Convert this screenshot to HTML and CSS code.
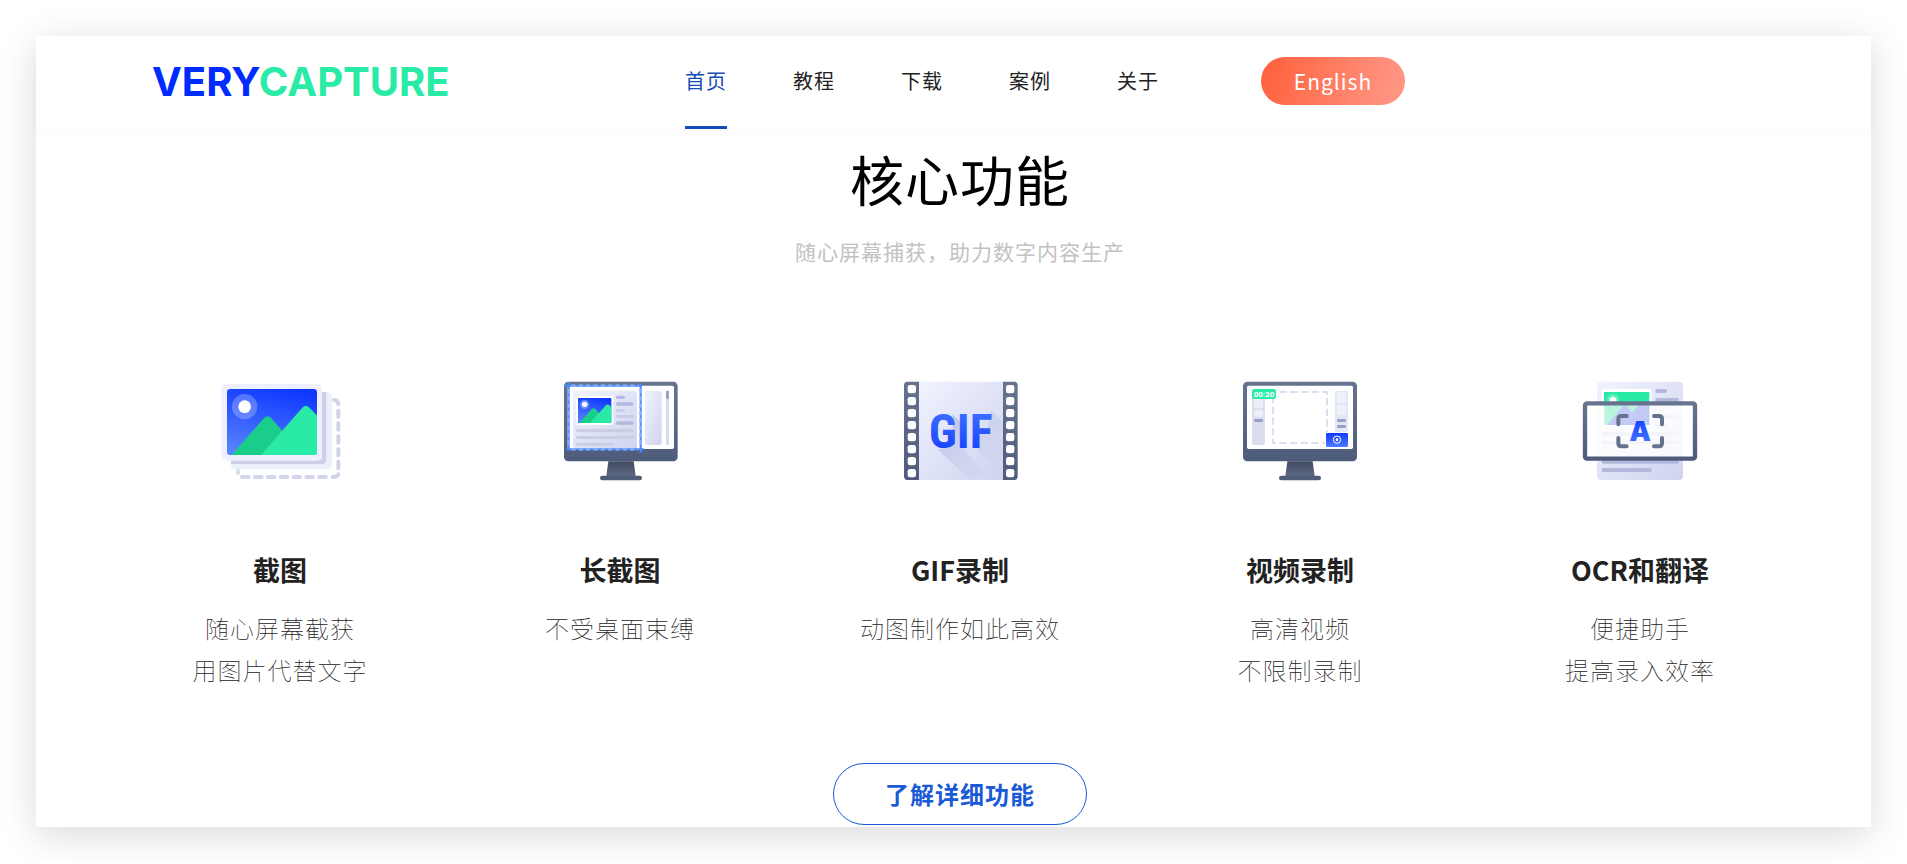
FILE: index.html
```html
<!DOCTYPE html>
<html lang="zh-CN">
<head>
<meta charset="utf-8">
<title>VERYCAPTURE</title>
<link rel="stylesheet" href="styles.css">
</head>
<body>
<div class="panel">
  <header class="header">
    <a class="logo" href="#"><span class="logo-very">VERY</span><span class="logo-capture">CAPTURE</span></a>
    <nav class="nav">
      <a class="nav-link active" href="#">首页</a>
      <a class="nav-link" href="#">教程</a>
      <a class="nav-link" href="#">下载</a>
      <a class="nav-link" href="#">案例</a>
      <a class="nav-link" href="#">关于</a>
    </nav>
    <button class="lang" type="button">English</button>
  </header>
  <main class="main">
    <h1 class="heading">核心功能</h1>
    <p class="subtitle">随心屏幕捕获，助力数字内容生产</p>
    <section class="features">
      <article class="feature">
        <svg class="art art-wide" viewBox="0 0 480 360" aria-hidden="true">
          <defs>
            <linearGradient id="sky" x1="0.6" y1="0" x2="0.3" y2="1"><stop offset="0" stop-color="#1039ff"/><stop offset="1" stop-color="#5683ff"/></linearGradient>
            <linearGradient id="paper" x1="0" y1="0" x2="1" y2="1"><stop offset="0" stop-color="#f1f3ff"/><stop offset="1" stop-color="#cfd4ee"/></linearGradient>
            <linearGradient id="slate" x1="0" y1="0" x2="0" y2="1"><stop offset="0" stop-color="#66748f"/><stop offset="1" stop-color="#4f5b7b"/></linearGradient>
            <linearGradient id="stand" x1="0" y1="0" x2="0" y2="1"><stop offset="0" stop-color="#404a60"/><stop offset="1" stop-color="#5d6a86"/></linearGradient>
            <linearGradient id="blue" x1="0" y1="0" x2="0" y2="1"><stop offset="0" stop-color="#4477ff"/><stop offset="1" stop-color="#1038ff"/></linearGradient>
            <linearGradient id="blue2" x1="0" y1="0" x2="0" y2="1"><stop offset="0" stop-color="#1038ff"/><stop offset="1" stop-color="#4c7dff"/></linearGradient>
            <linearGradient id="fade" x1="0" y1="0" x2="1" y2="1"><stop offset="0" stop-color="#9da6d6" stop-opacity=".7"/><stop offset="1" stop-color="#c9cfec" stop-opacity="0"/></linearGradient>
            <clipPath id="photo"><rect x="81" y="60" width="270" height="198" rx="10"/></clipPath>
          </defs>
          <path d="M114 300V312" stroke="#d9dcee" stroke-width="12" stroke-linecap="round"/>
          <path d="M126 324H395" stroke="#d3d6ea" stroke-width="12" stroke-linecap="round" stroke-dasharray="20 18.6" fill="none"/>
          <path d="M402 93Q415 94 415 106M415 125V144M415 163V182M415 202V221M415 240V259M415 278V298M415 316Q412 324 398 324" fill="none" stroke="#d0d4e8" stroke-width="12" stroke-linecap="round"/>
          <rect x="93" y="69" width="303" height="232" rx="14" fill="#eceffc"/>
          <path d="M93 270V285H364Q379 285 379 270V69H366V270Z" fill="#cccfe6"/>
          <rect x="65" y="44" width="301" height="231" rx="15" fill="#eef0ff"/>
          <rect x="81" y="60" width="270" height="198" rx="10" fill="url(#sky)"/>
          <g clip-path="url(#photo)">
            <circle cx="134" cy="113" r="38" fill="#fff" opacity=".25"/><circle cx="134" cy="113" r="19" fill="#fff"/>
            <path d="M94 259L192 147Q203 136 213 147L300 245V260Z" fill="#1bcd8b"/>
            <path d="M182 259L307 116Q318 105 328 116L355 144V260Z" fill="#2aeba6"/>
          </g>
        </svg>
        <h2 class="name">截图</h2>
        <p class="desc">随心屏幕截获<br>用图片代替文字</p>
      </article>
      <article class="feature">
        <svg class="art" viewBox="0 0 420 360" aria-hidden="true">
          <rect x="42" y="38" width="341" height="239" rx="13" fill="url(#slate)"/>
          <rect x="53" y="50" width="319" height="190" rx="5" fill="#fff"/>
          <path d="M175 277H251L257 321H169Z" fill="url(#stand)"/>
          <rect x="150" y="320" width="126" height="14" rx="7" fill="#505d7a"/>
          <path d="M69 240V75Q69 65 79 65H251Q261 65 261 75V240Z" fill="url(#paper)"/>
          <rect x="78" y="80" width="112" height="88" rx="5" fill="#fff"/>
          <rect x="84" y="87" width="100" height="75" fill="url(#sky)"/>
          <circle cx="104" cy="106" r="14" fill="#fff" opacity=".3"/><circle cx="104" cy="106" r="8" fill="#fff"/>
          <path d="M88 162L125 120Q130 115 136 120L165 154V162Z" fill="#1bcd8b"/>
          <path d="M120 162L168 109Q173 104 178 109L184 116V162Z" fill="#2aeba6"/>
          <g fill="#b3b8dc"><rect x="198" y="80" width="27" height="10" rx="5"/><rect x="198" y="100" width="53" height="10" rx="5"/><rect x="198" y="157" width="53" height="10" rx="5"/></g>
          <g fill="#c9cde6"><rect x="198" y="120" width="27" height="9" rx="4"/><rect x="198" y="138" width="53" height="9" rx="4"/><rect x="78" y="180" width="173" height="10" rx="5"/><rect x="78" y="201" width="173" height="9" rx="4"/><rect x="78" y="221" width="112" height="9" rx="4"/></g>
          <rect x="284" y="65" width="51" height="163" rx="9" fill="url(#paper)"/>
          <rect x="348" y="65" width="9" height="163" rx="4" fill="#d7dbef"/><rect x="348" y="65" width="9" height="25" rx="4" fill="#9ba2c6"/>
          <path d="M56 39V245M42 50H276M272 45V251M50 241H282" fill="none" stroke="#4b88fa" stroke-width="6"/>
          <path d="M56 60V235M64 50H265M272 60V235M64 241H265" fill="none" stroke="#83b0ff" stroke-width="7" stroke-dasharray="13 9"/>
        </svg>
        <h2 class="name">长截图</h2>
        <p class="desc">不受桌面束缚</p>
      </article>
      <article class="feature">
        <svg class="art" viewBox="0 0 420 360" aria-hidden="true">
          <rect x="80" y="38" width="265" height="295" fill="url(#paper)"/>
          <path d="M188 135L226 173V248L294 315L240 333L145 242L188 230ZM303 125L339 160V320L265 248V200L290 190Z" fill="url(#fade)"/>
          <text class="gif" x="212" y="238">GIF</text>
          <g fill="url(#slate)"><path d="M52 38H87V333H52Q42 333 42 322V49Q42 38 52 38Z"/><path d="M339 38H373Q383 38 383 49V322Q383 333 373 333H339Z"/></g>
          <g fill="#fff">
            <rect x="53" y="48" width="25" height="25" rx="7"/><rect x="53" y="84" width="25" height="25" rx="7"/><rect x="53" y="120" width="25" height="25" rx="7"/><rect x="53" y="156" width="25" height="25" rx="7"/><rect x="53" y="192" width="25" height="25" rx="7"/><rect x="53" y="228" width="25" height="25" rx="7"/><rect x="53" y="264" width="25" height="25" rx="7"/><rect x="53" y="300" width="25" height="25" rx="7"/>
            <rect x="348" y="48" width="25" height="25" rx="7"/><rect x="348" y="84" width="25" height="25" rx="7"/><rect x="348" y="120" width="25" height="25" rx="7"/><rect x="348" y="156" width="25" height="25" rx="7"/><rect x="348" y="192" width="25" height="25" rx="7"/><rect x="348" y="228" width="25" height="25" rx="7"/><rect x="348" y="264" width="25" height="25" rx="7"/><rect x="348" y="300" width="25" height="25" rx="7"/>
          </g>
        </svg>
        <h2 class="name">GIF录制</h2>
        <p class="desc">动图制作如此高效</p>
      </article>
      <article class="feature">
        <svg class="art" viewBox="0 0 420 360" aria-hidden="true">
          <rect x="39" y="38" width="342" height="239" rx="13" fill="url(#slate)"/>
          <rect x="51" y="50" width="318" height="190" rx="5" fill="#fff"/>
          <path d="M172 277H248L254 321H166Z" fill="url(#stand)"/>
          <rect x="147" y="320" width="126" height="14" rx="7" fill="#505d7a"/>
          <rect x="66" y="65" width="39" height="163" rx="5" fill="#dadded"/>
          <rect x="72" y="88" width="27" height="30" rx="6" fill="#eceef8"/><rect x="72" y="123" width="27" height="21" rx="6" fill="#eceef8"/>
          <rect x="72" y="150" width="27" height="9" rx="4" fill="#9ba1c6"/>
          <rect x="315" y="65" width="39" height="125" rx="5" fill="#e3e6f3"/>
          <rect x="321" y="70" width="27" height="31" rx="6" fill="#f0f2fb"/><rect x="321" y="107" width="27" height="31" rx="6" fill="#f0f2fb"/>
          <g fill="#9ba1c6"><rect x="321" y="150" width="27" height="9" rx="4"/><rect x="321" y="168" width="27" height="9" rx="4"/></g>
          <rect x="129" y="69" width="162" height="153" fill="none" stroke="#dcdeef" stroke-width="6" stroke-dasharray="22 10" stroke-dashoffset="12"/>
          <rect x="66" y="60" width="72" height="30" rx="7" fill="#2aeba6"/>
          <text class="timer" x="102" y="83">00:30</text>
          <rect x="285" y="189" width="72" height="47" rx="5" fill="#fff"/>
          <rect x="288" y="192" width="66" height="42" rx="4" fill="url(#blue2)"/>
          <circle cx="321" cy="212" r="11" fill="none" stroke="#fff" stroke-width="3"/><circle cx="321" cy="212" r="4" fill="#fff"/>
        </svg>
        <h2 class="name">视频录制</h2>
        <p class="desc">高清视频<br>不限制录制</p>
      </article>
      <article class="feature">
        <svg class="art" viewBox="0 0 420 360" aria-hidden="true">
          <rect x="81" y="38" width="258" height="295" rx="12" fill="url(#paper)"/>
          <rect x="95" y="60" width="150" height="115" rx="6" fill="#fff"/>
          <rect x="102" y="69" width="136" height="98" fill="#2aeba6"/>
          <circle cx="129" cy="94" r="18" fill="#fff" opacity=".3"/><circle cx="129" cy="94" r="10" fill="#fff"/>
          <g fill="#b3b8dc"><rect x="256" y="60" width="35" height="12" rx="5"/><rect x="256" y="87" width="70" height="12" rx="5"/><rect x="256" y="138" width="70" height="12" rx="5"/><rect x="256" y="164" width="35" height="12" rx="5"/><rect x="95" y="189" width="231" height="11" rx="5"/><rect x="95" y="215" width="231" height="11" rx="5"/><rect x="95" y="272" width="231" height="12" rx="5"/><rect x="95" y="297" width="150" height="12" rx="5"/></g>
          <rect x="45" y="103" width="330" height="166" rx="5" fill="#fff" opacity=".85"/>
          <path d="M103 104H238V167H103Z" fill="#86eac0" opacity=".4"/>
          <path d="M111 168L158 112Q165 105 172 112L186 132L207 107H238V168Z" fill="#c3caf5"/>
          <rect x="45" y="103" width="330" height="166" rx="6" fill="none" stroke="url(#slate)" stroke-width="13"/>
          <path d="M145 166V150Q145 141 154 141H170M252 141H267Q276 141 276 150V166M145 207V223Q145 232 154 232H170M252 232H267Q276 232 276 223V207" fill="none" stroke="#64728e" stroke-width="12" stroke-linecap="round"/>
          <text class="letter" x="210" y="216">A</text>
        </svg>
        <h2 class="name">OCR和翻译</h2>
        <p class="desc">便捷助手<br>提高录入效率</p>
      </article>
    </section>
    <a class="more" href="#">了解详细功能</a>
  </main>
</div>
</body>
</html>
```
FILE: styles.css
```css
* { box-sizing: border-box; }
body {
  margin: 0;
  padding: 36px;
  background: #fff;
  color: #222;
  font-family: "Noto Sans CJK SC", "Noto Sans", sans-serif;
}
h1, h2, p { margin: 0; }
a { color: inherit; text-decoration: none; }
.panel {
  background: #fff;
  box-shadow: 0 8px 36px rgba(0, 0, 0, .15);
}
.header {
  display: flex;
  align-items: stretch;
  height: 93px;
  padding-left: 116px;
  box-shadow: 0 4px 12px rgba(0, 0, 0, .02);
}
.logo {
  width: 300px;
  font: 700 40px/91px Inter, sans-serif;
  white-space: nowrap;
}
.logo-very { color: #002bff; }
.logo-capture { color: #2aeba6; }
.nav {
  display: flex;
  gap: 66px;
  margin-left: 233px;
}
.nav-link {
  font-size: 20px;
  line-height: 90px;
  letter-spacing: 1px;
  white-space: nowrap;
  border-bottom: 3px solid transparent;
}
.nav-link.active { color: #174bb8; border-color: #174bb8; }
.lang {
  align-self: center;
  width: 144px;
  height: 48px;
  margin: 0 0 3px 102px;
  padding: 0;
  border: 0;
  border-radius: 24px;
  background: linear-gradient(105deg, #ff6542 10%, #ff9482 90%);
  color: #fff;
  font: 400 21px/46px "Noto Sans CJK SC", "Noto Sans", sans-serif;
  letter-spacing: 1px;
}
.main {
  display: flex;
  flex-direction: column;
  align-items: center;
  padding: 10px 61px 2px 74px;
}
.heading {
  color: #000;
  font-size: 54px;
  font-weight: 400;
  line-height: 80px;
  letter-spacing: 1px;
}
.subtitle {
  margin-top: 11px;
  color: #c2c2c2;
  font-size: 21px;
  line-height: 42px;
  letter-spacing: 1px;
}
.features {
  display: grid;
  grid-template-columns: repeat(5, 1fr);
  width: 100%;
  margin-top: 97px;
}
.feature {
  display: flex;
  flex-direction: column;
  align-items: center;
  text-align: center;
}
.art { width: 140px; height: 120px; }
.art-wide { width: 160px; }
.name {
  margin-top: 60px;
  font-size: 27px;
  font-weight: 700;
  line-height: 42px;
}
.desc {
  margin-top: 16px;
  font-size: 24px;
  font-weight: 100;
  line-height: 42px;
  letter-spacing: 1px;
}
.more {
  width: 254px;
  margin-top: 72px;
  border: 1px solid #1a5ad7;
  border-radius: 31px;
  color: #1a5ad7;
  font-size: 24px;
  font-weight: 700;
  line-height: 60px;
  letter-spacing: 1px;
  text-align: center;
}
.gif, .letter, .timer { text-anchor: middle; font-weight: 700; }
.gif { font-family: "Liberation Sans Narrow", "Roboto Condensed", Roboto, sans-serif; font-size: 144px; fill: url(#blue); }
.letter { font-family: Inter, sans-serif; font-size: 82px; font-weight: 900; fill: url(#blue2); }
.timer { font-family: Roboto, sans-serif; font-size: 24px; fill: #fff; }
```
